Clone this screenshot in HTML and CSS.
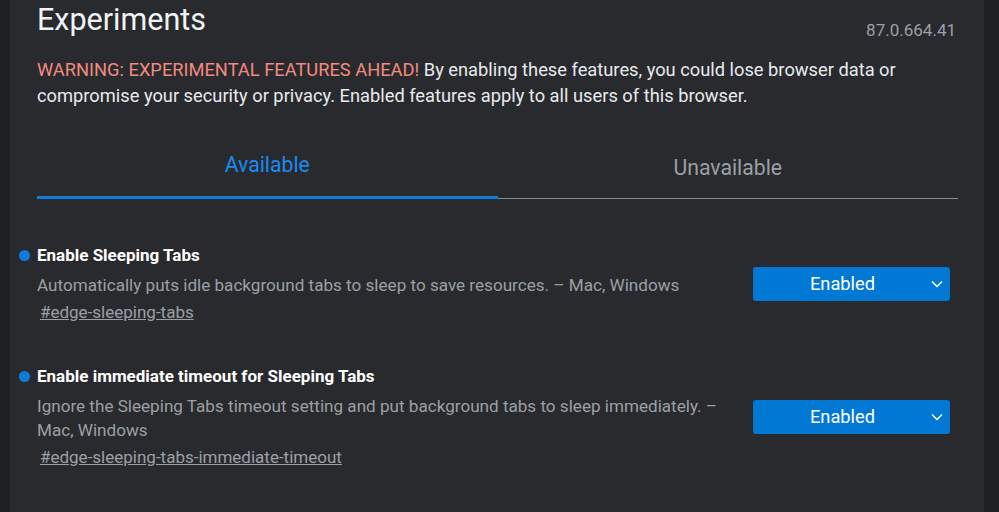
FILE: index.html
```html
<!DOCTYPE html>
<html>
<head>
<meta charset="utf-8">
<link rel="stylesheet" href="styles.css">
</head>
<body>
<div class="page">
  <div class="header">
    <h1 class="title">Experiments</h1>
    <span class="version">87.0.664.41</span>
  </div>
  <p class="warning"><span class="warn">WARNING: EXPERIMENTAL FEATURES AHEAD!</span> By enabling these features, you could lose browser data or compromise your security or privacy. Enabled features apply to all users of this browser.</p>
  <div class="tabs">
    <div class="tab active">Available</div>
    <div class="tab">Unavailable</div>
  </div>
  <div class="features">
    <div class="feature">
      <div class="info">
        <div class="name"><span class="dot"></span>Enable Sleeping Tabs</div>
        <p class="desc">Automatically puts idle background tabs to sleep to save resources. – Mac, Windows</p>
        <a class="link" href="#edge-sleeping-tabs">#edge-sleeping-tabs</a>
      </div>
      <div class="select">Enabled<svg class="chev" width="12" height="8" viewBox="0 0 12 8"><path d="M1 1.5 L6 6.5 L11 1.5" fill="none" stroke="#fff" stroke-width="1.5"/></svg></div>
    </div>
    <div class="feature">
      <div class="info">
        <div class="name"><span class="dot"></span>Enable immediate timeout for Sleeping Tabs</div>
        <p class="desc">Ignore the Sleeping Tabs timeout setting and put background tabs to sleep immediately. – Mac, Windows</p>
        <a class="link" href="#edge-sleeping-tabs-immediate-timeout">#edge-sleeping-tabs-immediate-timeout</a>
      </div>
      <div class="select">Enabled<svg class="chev" width="12" height="8" viewBox="0 0 12 8"><path d="M1 1.5 L6 6.5 L11 1.5" fill="none" stroke="#fff" stroke-width="1.5"/></svg></div>
    </div>
  </div>
</div>
</body>
</html>
```
FILE: styles.css
```css
html, body {
  margin: 0;
  padding: 0;
  height: 100%;
  background: #1f2023;
  overflow: hidden;
}
body {
  font-family: Roboto, "Noto Sans", sans-serif;
  color: #e8eaed;
}
.page {
  margin: 0 15px 0 10px;
  background: #292a2d;
  height: 100%;
  padding: 0 26px 0 27px;
  box-sizing: border-box;
}
.header {
  display: flex;
  justify-content: space-between;
  align-items: flex-end;
  height: 40px;
}
.title {
  margin: 0 0 1px;
  font-size: 30.5px;
  font-weight: 400;
  line-height: 38px;
  color: #f1f3f4;
}
.version {
  font-size: 17px;
  color: #9aa0a6;
  line-height: 20px;
  margin-right: 2px;
}
.warning {
  margin: 17px 0 0;
  font-size: 18.3px;
  line-height: 26px;
  color: #e8eaed;
}
.warn {
  color: #f28b82;
}
.tabs {
  display: flex;
  margin-top: 46px;
}
.tab {
  flex: 1;
  text-align: center;
  font-size: 21.2px;
  color: #9aa0a6;
  border-bottom: 1px solid #8a8b8e;
}
.tab.active {
  color: #1a8bf2;
  border-bottom: 3px solid #0f7bdc;
  line-height: 20px;
  padding-bottom: 21px;
}
.tab:not(.active) {
  line-height: 24px;
  padding-top: 1px;
  padding-bottom: 17px;
}
.features {
  margin-top: 45px;
}
.feature {
  display: flex;
  justify-content: space-between;
  align-items: center;
  margin-bottom: 41px;
}
.info {
  width: 690px;
}
.name {
  position: relative;
  font-size: 17px;
  font-weight: 700;
  color: #ffffff;
  line-height: 22px;
}
.dot {
  position: absolute;
  left: -18px;
  top: 6px;
  width: 11px;
  height: 11px;
  border-radius: 50%;
  background: #0f7bdc;
}
.desc {
  margin: 7px 0 0;
  font-size: 17.1px;
  line-height: 24px;
  color: #9aa0a6;
}
.link {
  display: inline-block;
  margin: 3px 0 0 3px;
  font-size: 17px;
  line-height: 24px;
  color: #9aa0a6;
  text-decoration: underline;
}
.select {
  position: relative;
  width: 197px;
  height: 34px;
  box-sizing: border-box;
  background: #0078d4;
  border-radius: 3px;
  color: #fff;
  font-size: 18.3px;
  line-height: 34px;
  text-align: center;
  padding-right: 18px;
  margin: 0 8px 1px 0;
}
.chev {
  position: absolute;
  right: 7px;
  top: 13px;
}
```
